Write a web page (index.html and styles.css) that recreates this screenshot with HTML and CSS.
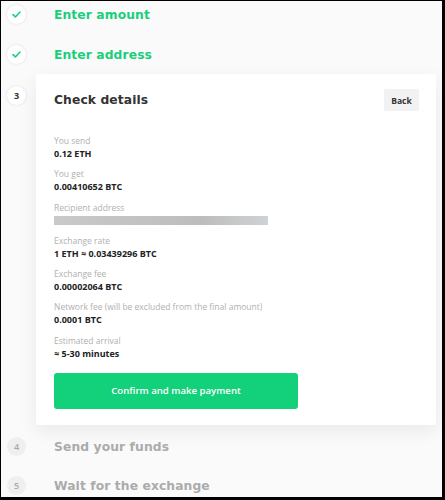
FILE: index.html
```html
<!DOCTYPE html>
<html>
<head>
<meta charset="utf-8">
<link rel="stylesheet" href="styles.css">
</head>
<body>
<div class="frame">
  <div class="step done">
    <div class="marker"><span class="dot"><svg width="9" height="7" viewBox="0 0 9 7"><path d="M1 3.6 L3.4 6 L8 1" fill="none" stroke="#19cf7b" stroke-width="1.6" stroke-linecap="round" stroke-linejoin="round"/></svg></span></div>
    <div class="body"><div class="head"><span class="title">Enter amount</span></div></div>
  </div>
  <div class="step done">
    <div class="marker"><span class="dot"><svg width="9" height="7" viewBox="0 0 9 7"><path d="M1 3.6 L3.4 6 L8 1" fill="none" stroke="#19cf7b" stroke-width="1.6" stroke-linecap="round" stroke-linejoin="round"/></svg></span></div>
    <div class="body"><div class="head"><span class="title">Enter address</span></div></div>
  </div>
  <div class="step current">
    <div class="marker"><span class="dot">3</span></div>
    <div class="body card">
      <div class="head">
        <span class="title">Check details</span>
        <button class="back">Back</button>
      </div>
      <div class="details">
        <div class="item"><div class="label">You send</div><div class="value">0.12 ETH</div></div>
        <div class="item"><div class="label">You get</div><div class="value">0.00410652 BTC</div></div>
        <div class="item"><div class="label">Recipient address</div><div class="value"><span class="blur"></span></div></div>
        <div class="item"><div class="label">Exchange rate</div><div class="value">1 ETH ≈ 0.03439296 BTC</div></div>
        <div class="item"><div class="label">Exchange fee</div><div class="value">0.00002064 BTC</div></div>
        <div class="item"><div class="label">Network fee (will be excluded from the final amount)</div><div class="value">0.0001 BTC</div></div>
        <div class="item"><div class="label">Estimated arrival</div><div class="value">≈ 5-30 minutes</div></div>
      </div>
      <button class="confirm">Confirm and make payment</button>
    </div>
  </div>
  <div class="step todo">
    <div class="marker"><span class="dot">4</span></div>
    <div class="body"><div class="head"><span class="title">Send your funds</span></div></div>
  </div>
  <div class="step todo last">
    <div class="marker"><span class="dot">5</span></div>
    <div class="body"><div class="head"><span class="title">Wait for the exchange</span></div></div>
  </div>
</div>
</body>
</html>
```
FILE: styles.css
```css
html, body {
  margin: 0;
  padding: 0;
}
body {
  background: #000;
  font-family: "Open Sans", "Liberation Sans", sans-serif;
}
.frame {
  box-sizing: border-box;
  width: 445px;
  height: 500px;
  border-style: solid;
  border-color: #000;
  border-width: 1px 3px 3px 1px;
  background: #fafafa;
  overflow: hidden;
  display: flex;
  flex-direction: column;
}
.step {
  display: flex;
  margin-bottom: 12px;
}
.step.current {
  margin-top: -7px;
  margin-bottom: 8px;
}
.step.todo {
  margin-bottom: 11px;
}
.marker {
  width: 35px;
  flex: none;
  box-sizing: border-box;
  padding-left: 6px;
}
.step.current .marker {
  padding-top: 12px;
}
.dot {
  width: 19px;
  height: 19px;
  margin-top: 4px;
  border-radius: 50%;
  background: #fff;
  box-shadow: 0 0 3px rgba(0,0,0,0.12);
  display: flex;
  align-items: center;
  justify-content: center;
  font-size: 9px;
  font-weight: 700;
  color: #333;
}
.step.current .dot {
  margin-top: 0;
}
.step.todo .dot {
  background: #efefef;
  box-shadow: none;
  color: #a8a8a8;
  font-weight: 600;
}
.body {
  flex: 1;
  padding-left: 18px;
  margin-right: 6px;
}
.head {
  height: 28px;
  display: flex;
  align-items: center;
  justify-content: space-between;
}
.title {
  font-family: "DejaVu Sans", sans-serif;
  font-weight: 700;
  font-size: 12.3px;
  letter-spacing: 0.1px;
}
.done .title {
  color: #19cf7b;
}
.current .title {
  color: #333;
}
.todo .title {
  color: #ababab;
}
.card {
  background: #fff;
  box-shadow: 0 6px 18px rgba(0,0,0,0.07);
  padding: 12px 17px 16px 18px;
}
.back {
  width: 35px;
  height: 22px;
  border: none;
  border-radius: 2px;
  background: #f2f2f2;
  font-family: "Open Sans", sans-serif;
  font-weight: 700;
  font-size: 8.5px;
  color: #333;
  padding: 0;
}
.details {
  margin-top: 21px;
  display: flex;
  flex-direction: column;
  gap: 7.3px;
}
.label {
  font-size: 8.5px;
  line-height: 12px;
  color: #b0b0b0;
}
.value {
  font-size: 9px;
  line-height: 14px;
  min-height: 14px;
  font-weight: 700;
  color: #222;
  display: flex;
  align-items: center;
}
.blur {
  display: block;
  width: 214px;
  height: 9px;
  background: linear-gradient(90deg, #c9c9c9 0%, #c2c2c2 40%, #bdbdbd 70%, #cfd2d4 100%);
}
.confirm {
  display: block;
  margin-top: 12px;
  width: 244px;
  height: 36px;
  border: none;
  border-radius: 3px;
  background: #13d07a;
  color: #fff;
  font-family: "Open Sans", sans-serif;
  font-weight: 600;
  font-size: 9.6px;
  padding: 0;
}
```
